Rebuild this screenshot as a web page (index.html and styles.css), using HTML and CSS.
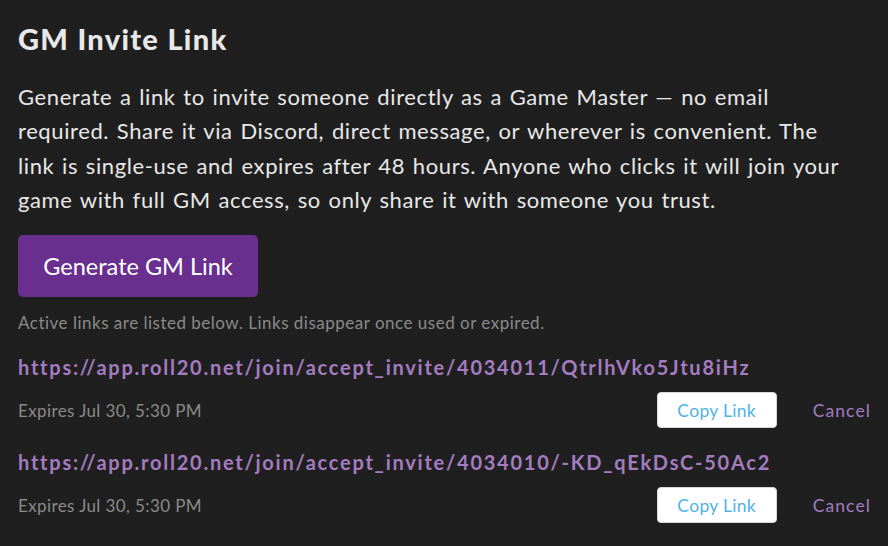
FILE: index.html
```html
<!DOCTYPE html>
<html>
<head>
<meta charset="utf-8">
<link rel="stylesheet" href="styles.css">
</head>
<body>
<div class="panel">
  <h2 class="title">GM Invite Link</h2>
  <p class="desc">Generate a link to invite someone directly as a Game Master — no email required. Share it via Discord, direct message, or wherever is convenient. The link is single-use and expires after 48 hours. Anyone who clicks it will join your game with full GM access, so only share it with someone you trust.</p>
  <button class="gen-btn">Generate GM Link</button>
  <p class="hint">Active links are listed below. Links disappear once used or expired.</p>
  <div class="links">
    <div class="link-item">
      <a class="link-url">https://app.roll20.net/join/accept_invite/4034011/QtrlhVko5Jtu8iHz</a>
      <div class="link-row">
        <span class="expires">Expires Jul 30, 5:30 PM</span>
        <button class="copy-btn">Copy Link</button>
        <a class="cancel">Cancel</a>
      </div>
    </div>
    <div class="link-item">
      <a class="link-url">https://app.roll20.net/join/accept_invite/4034010/-KD_qEkDsC-50Ac2</a>
      <div class="link-row">
        <span class="expires">Expires Jul 30, 5:30 PM</span>
        <button class="copy-btn">Copy Link</button>
        <a class="cancel">Cancel</a>
      </div>
    </div>
  </div>
</div>
</body>
</html>
```
FILE: styles.css
```css
html, body {
  margin: 0;
  padding: 0;
  background: #1f1f1f;
}
body {
  font-family: "Lato", "Open Sans", sans-serif;
  color: #e8e8e8;
}
.panel {
  padding: 22px 17px 0 18px;
}
.title {
  margin: 0;
  font-family: "Lato", sans-serif;
  font-weight: 900;
  font-size: 29px;
  letter-spacing: 1.3px;
  line-height: 34px;
  color: #e8e8e8;
}
.desc {
  margin: 24px 0 0 0;
  max-width: 832px;
  font-size: 22px;
  letter-spacing: 0.6px;
  word-spacing: 1.5px;
  line-height: 34.3px;
  color: #e8e8e8;
}
.gen-btn {
  display: block;
  margin-top: 18px;
  width: 240px;
  height: 62px;
  background: #692f8e;
  color: #ffffff;
  border: none;
  border-radius: 5px;
  font-family: inherit;
  font-size: 23.5px;
  padding: 0;
}
.hint {
  margin: 15px 0 0 0;
  font-size: 17px;
  letter-spacing: 0.5px;
  line-height: 22px;
  color: #8a8a8a;
}
.links {
  margin-top: 19px;
}
.link-url {
  display: block;
  font-weight: 700;
  font-size: 20px;
  letter-spacing: 1.75px;
  line-height: 28px;
  color: #a57cc0;
}
.link-url + .link-row {
  margin-top: 11px;
}
.link-item + .link-item {
  margin-top: 20px;
}
.link-row {
  display: flex;
  align-items: center;
}
.expires {
  flex: 1;
  font-size: 17px;
  letter-spacing: 0.4px;
  color: #8a8a8a;
}
.copy-btn {
  width: 120px;
  height: 36px;
  background: #ffffff;
  border: 1px solid #d8d8d8;
  border-radius: 4px;
  color: #4fb3ea;
  font-family: inherit;
  font-size: 17.5px;
  letter-spacing: 0.3px;
  padding: 0;
}
.cancel {
  margin-left: 36px;
  font-size: 17.5px;
  letter-spacing: 1.1px;
  color: #a57cc0;
}
```
